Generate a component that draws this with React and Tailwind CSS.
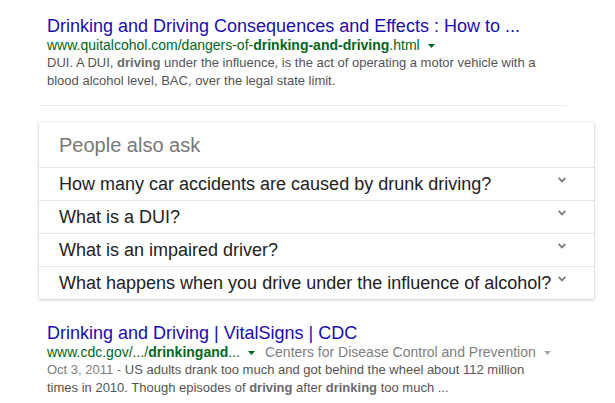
import React from 'react';

const Arrow = ({ color = 'text-[#006621]', className = '' }) => (
  <svg
    width="7"
    height="4"
    viewBox="0 0 7 4"
    className={`inline-block align-middle fill-current ${color} ${className}`}
  >
    <path d="M0 0h7L3.5 4z" />
  </svg>
);

const Chevron = () => (
  <svg width="8" height="6" viewBox="0 0 8 6" className="shrink-0 mb-[8px]">
    <path d="M0.7 0.9L4 4.4 7.3 0.9" fill="none" stroke="#7a7a7a" strokeWidth="1.7" />
  </svg>
);

const questions = [
  'How many car accidents are caused by drunk driving?',
  'What is a DUI?',
  'What is an impaired driver?',
  'What happens when you drive under the influence of alcohol?',
];

const App = () => {
  return (
    <div className="min-h-[403px] bg-white pt-[15px] pl-[39px] font-['Liberation_Sans',Arial,sans-serif]">
      {/* first result */}
      <div className="pl-2">
        <div className="text-[18px] leading-[22px] text-[#1a0dab] whitespace-nowrap">
          Drinking and Driving Consequences and Effects : How to ...
        </div>
        <div className="text-[14px] leading-[16px] text-[#006621] whitespace-nowrap">
          www.quitalcohol.com/dangers-of-<b>drinking-and-driving</b>.html
          <Arrow className="ml-[8px]" />
        </div>
        <p className="mt-px max-w-[508px] text-[13px] leading-[18px] text-[#545454]">
          DUI. A DUI, <b className="text-[#6a6a6a]">driving</b> under the influence, is the act of
          operating a motor vehicle with a blood alcohol level, BAC, over the legal state limit.
        </p>
      </div>

      <div className="mt-[15px] h-px w-[528px] bg-[#ebebeb]" />

      {/* people also ask */}
      <div className="mt-[16px] w-[555px] bg-white shadow-[0_1px_3px_rgba(0,0,0,0.2),0_0_1px_rgba(0,0,0,0.2)]">
        <div className="flex h-[45px] items-center pl-5 text-[20px] leading-[24px] text-[#777]">
          People also ask
        </div>
        {questions.map((q) => (
          <div
            key={q}
            className="flex h-[33px] items-center border-t border-[#e5e5e5] pl-5 pr-7 text-[18px] leading-[22px] text-[#222]"
          >
            <span className="whitespace-nowrap">{q}</span>
            <span className="ml-auto flex pl-[6px]">
              <Chevron />
            </span>
          </div>
        ))}
      </div>

      {/* second result */}
      <div className="mt-[23px] pl-2">
        <div className="text-[18px] leading-[22px] text-[#1a0dab] whitespace-nowrap">
          Drinking and Driving | VitalSigns | CDC
        </div>
        <div className="text-[14px] leading-[16px] whitespace-nowrap">
          <span className="text-[#006621]">
            www.cdc.gov/.../<b>drinkingand</b>...
          </span>
          <Arrow className="ml-[8px]" />
          <span className="ml-[10px] text-[#808080]">Centers for Disease Control and Prevention</span>
          <Arrow color="text-[#a8a8a8]" className="ml-[8px]" />
        </div>
        <p className="mt-px max-w-[508px] text-[13px] leading-[18px] text-[#545454]">
          <span className="text-[#808080]">Oct 3, 2011 - </span>US adults drank too much and got
          behind the wheel about 112 million times in 2010. Though episodes of{' '}
          <b className="text-[#6a6a6a]">driving</b> after <b className="text-[#6a6a6a]">drinking</b>{' '}
          too much ...
        </p>
      </div>
    </div>
  );
};

export default App;
